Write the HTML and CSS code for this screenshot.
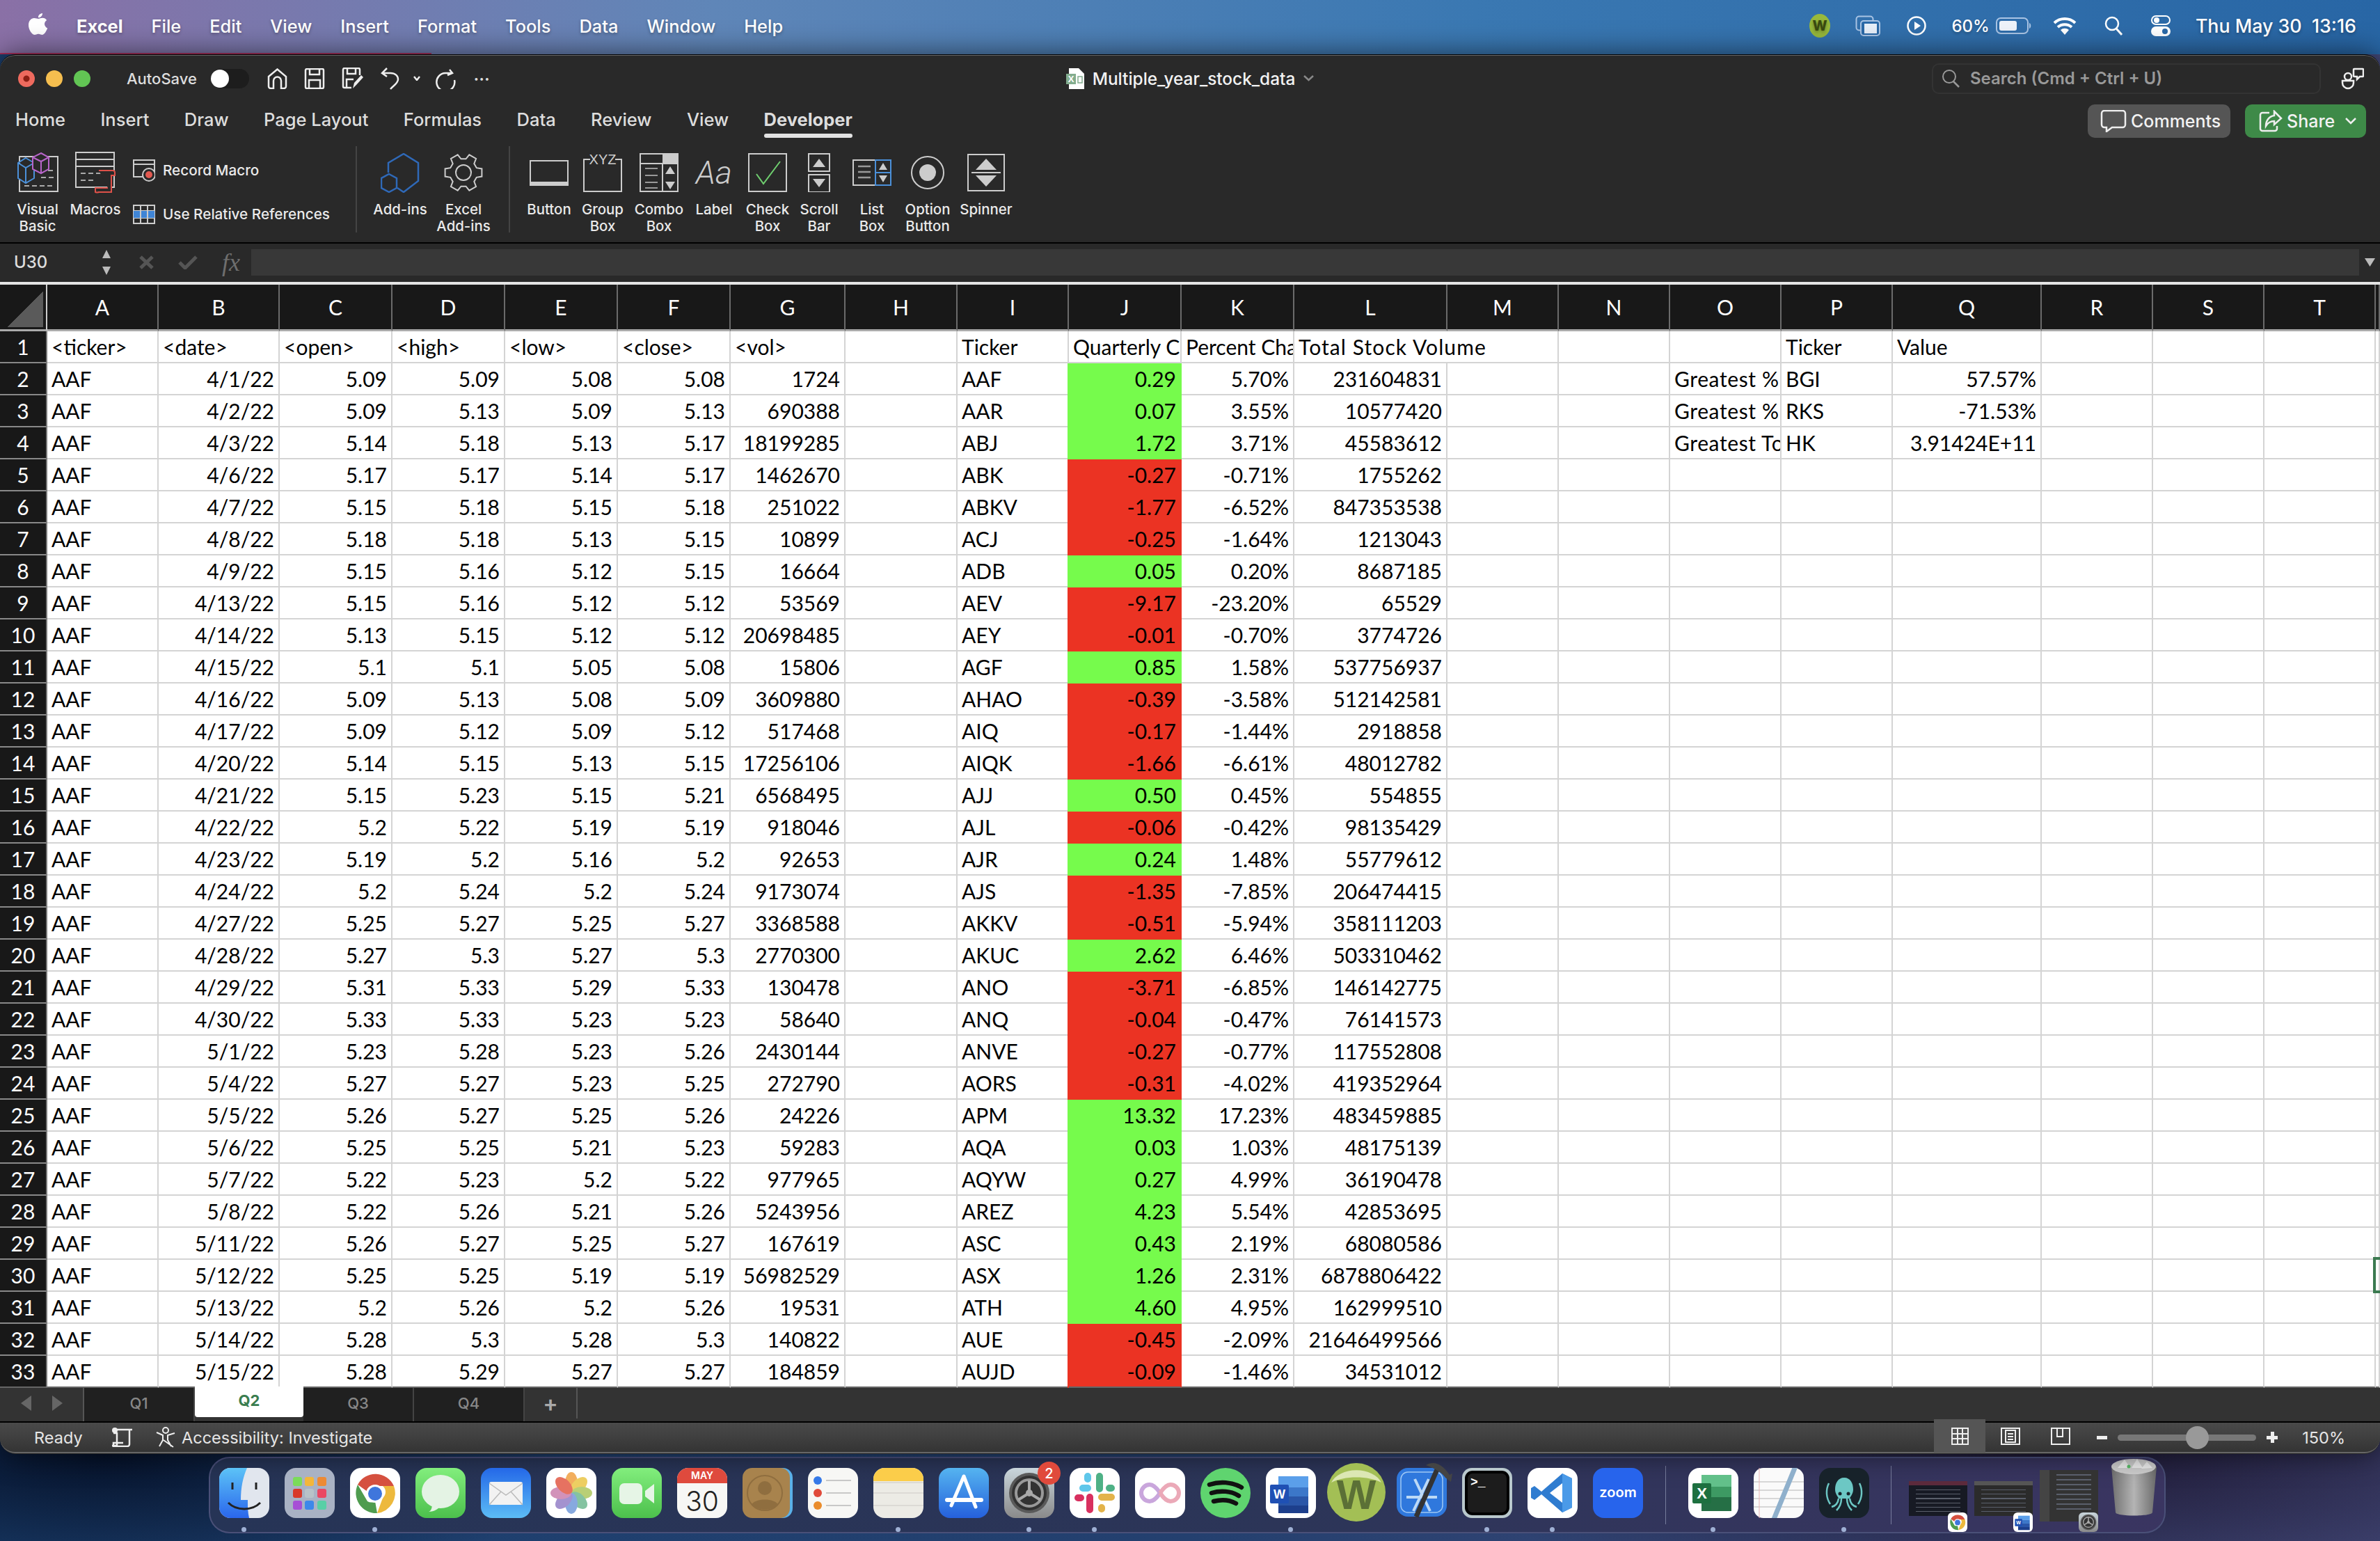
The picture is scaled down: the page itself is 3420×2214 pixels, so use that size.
FILE: index.html
```html
<!DOCTYPE html>
<html lang="en">
<head>
<meta charset="utf-8">
<title>Multiple_year_stock_data</title>
<link rel="stylesheet" href="styles.css">
</head>
<body>
<svg class="defs" width="0" height="0">
<defs>
<linearGradient id="gFinder" x1="0" y1="0" x2="0" y2="1"><stop offset="0" stop-color="#5cc3f7"/><stop offset="1" stop-color="#2a66ec"/></linearGradient>
<linearGradient id="gGreen" x1="0" y1="0" x2="0" y2="1"><stop offset="0" stop-color="#82ee7d"/><stop offset="1" stop-color="#4cc04c"/></linearGradient>
<linearGradient id="gMail" x1="0" y1="0" x2="0" y2="1"><stop offset="0" stop-color="#2468e8"/><stop offset="1" stop-color="#5cbcf6"/></linearGradient>
<linearGradient id="gStore" x1="0" y1="0" x2="0" y2="1"><stop offset="0" stop-color="#55b4f0"/><stop offset="1" stop-color="#2560dc"/></linearGradient>
<linearGradient id="gPrefs" x1="0" y1="0" x2="0" y2="1"><stop offset="0" stop-color="#c9d6dc"/><stop offset="1" stop-color="#8a8a8a"/></linearGradient>
<linearGradient id="gTrash" x1="0" y1="0" x2="1" y2="0"><stop offset="0" stop-color="#6f6f6f"/><stop offset=".5" stop-color="#b4b4b4"/><stop offset="1" stop-color="#6a6a6a"/></linearGradient>
<symbol id="iChrome" viewBox="0 0 72 72"><rect width="72" height="72" rx="16" fill="#fff"/><path d="M11 24a29 29 0 0 1 52 2H36a11 11 0 0 0-11 8z" fill="#d5503f"/><path d="M63 26a29 29 0 0 1-24 39l8-22a11 11 0 0 0 0-17z" fill="#edb93d"/><path d="M11 24l14 24a11 11 0 0 0 11 0l3 17A29 29 0 0 1 11 24z" fill="#4f9c4f"/><circle cx="36" cy="37" r="13" fill="#fff"/><circle cx="36" cy="37" r="10" fill="#3f76dc"/></symbol>
<symbol id="iWord" viewBox="0 0 72 72"><rect width="72" height="72" rx="16" fill="#fff"/><rect x="18" y="12" width="43" height="16" fill="#5b9fea"/><rect x="18" y="28" width="43" height="13" fill="#3c77c9"/><rect x="18" y="41" width="43" height="13" fill="#2a56a8"/><rect x="18" y="54" width="43" height="11" fill="#1d3f8c"/><rect x="6" y="24" width="27" height="27" rx="2" fill="#1f50b4"/><text x="19.500" y="44" class="ic-w">W</text></symbol>
<symbol id="iPrefs" viewBox="0 0 72 72"><rect width="72" height="72" rx="16" fill="url(#gPrefs)"/><circle cx="36" cy="36" r="29" fill="#5a5a5a"/><circle cx="36" cy="36" r="25" fill="#333"/><circle cx="36" cy="36" r="19" fill="none" stroke="#999" stroke-width="4"/><path d="M36 36V18M36 36L20 46M36 36L52 46" stroke="#aaa" stroke-width="4"/><circle cx="36" cy="36" r="5" fill="#aaa"/></symbol>
</defs>
</svg>

<header class="menubar">
  <nav class="menu-left">
    <svg class="apple" width="28" height="32" viewBox="0 0 28 32"><path d="M20 0c.3 3-2.400 6.500-6 6.300C13.600 3 16.600.4 20 0zM14.200 8c1.800 0 3.300-1.200 6-1.200 2.400 0 4.700 1.200 6 3.300-4.700 2.700-4 9.400 1 11.300-1.300 3.600-4.500 9.600-7.600 9.600-2 0-2.900-1.300-5.400-1.300s-3.500 1.300-5.300 1.300C4.800 31 0 23.500 0 17 0 10.700 4 7 8 7c2.500 0 4.400 1 6.200 1z" fill="#fff"/></svg>
    <b>Excel</b><span>File</span><span>Edit</span><span>View</span><span>Insert</span><span>Format</span><span>Tools</span><span>Data</span><span>Window</span><span>Help</span>
  </nav>
  <div class="menu-right">
    <svg class="st-w" width="30" height="34" viewBox="0 0 30 34"><ellipse cx="15" cy="17" rx="15" ry="17" fill="#98b93c"/><text x="15" y="24" class="ic-wsmall">W</text></svg>
    <svg class="st-copy" width="36" height="30" viewBox="0 0 36 30"><rect x="1.500" y="1.500" width="24" height="20" rx="4" fill="none" stroke="#a9c4e4" stroke-width="2"/><rect x="8" y="8" width="27" height="21" rx="4" fill="#2a69a8" stroke="#a9c4e4" stroke-width="2"/><rect x="13" y="12" width="18" height="14" fill="#e6eef8"/></svg>
    <svg class="st-play" width="28" height="28" viewBox="0 0 28 28"><circle cx="14" cy="14" r="12.500" fill="none" stroke="#fff" stroke-width="2.500"/><path d="M11 8l9 6-9 6z" fill="#fff"/></svg>
    <span class="st-pct">60%</span>
    <svg class="st-batt" width="51" height="24" viewBox="0 0 51 24"><rect x="1" y="1" width="45" height="22" rx="6" fill="none" stroke="#a9c4e4" stroke-width="2"/><rect x="5" y="5" width="25" height="14" rx="3" fill="#eef3fa"/><path d="M48 8c3 1 3 7 0 8z" fill="#a9c4e4"/></svg>
    <svg class="st-wifi" width="34" height="26" viewBox="0 0 34 26"><path d="M2 9a22 22 0 0 1 30 0M7 15a15 15 0 0 1 20 0" fill="none" stroke="#fff" stroke-width="4"/><path d="M11 19a9 9 0 0 1 12 0l-6 7z" fill="#fff"/></svg>
    <svg class="st-search" width="26" height="28" viewBox="0 0 26 28"><circle cx="11" cy="11" r="9" fill="none" stroke="#fff" stroke-width="2.500"/><path d="M17 18l8 9" stroke="#fff" stroke-width="3"/></svg>
    <svg class="st-ctl" width="28" height="30" viewBox="0 0 28 30"><rect x="1" y="1" width="26" height="12" rx="6" fill="none" stroke="#fff" stroke-width="2"/><circle cx="8" cy="7" r="4" fill="#fff"/><rect y="16" width="28" height="14" rx="7" fill="#fff"/><circle cx="20" cy="23" r="4" fill="#2a69a8"/></svg>
    <time class="st-time">Thu May 30&nbsp; 13:16</time>
  </div>
</header>

<main class="window">
  <div class="titlebar">
    <div class="tb-left">
      <i class="light red"></i><i class="light yellow"></i><i class="light green"></i>
      <span class="autosave">AutoSave</span>
      <span class="toggle"></span>
      <svg class="qa qa-home" width="29" height="30" viewBox="0 0 29 30"><path d="M2 12L14.500 1.500 27 12v14a3 3 0 0 1-3 3h-4V18a5 5 0 0 0-11 0v11H5a3 3 0 0 1-3-3z" class="ln"/></svg>
      <svg class="qa" width="30" height="30" viewBox="0 0 30 30"><path d="M2 3a2 2 0 0 1 2-2h22a2 2 0 0 1 2 2v24a2 2 0 0 1-2 2H4a2 2 0 0 1-2-2zM8 1v8h14V1M7 29V17h16v12" class="ln"/></svg>
      <svg class="qa" width="32" height="32" viewBox="0 0 32 32"><path d="M2 3a2 2 0 0 1 2-2h20a2 2 0 0 1 2 2v8M14 29H4a2 2 0 0 1-2-2V3M8 1v8h12V1M7 29V17h10" class="ln"/><path d="M16 30l2-8 10-11 3 3-10 11z" fill="#eee"/></svg>
      <svg class="qa" width="27" height="32" viewBox="0 0 27 32"><path d="M9 1L2 8l7 5M2 8h12c7 0 11 4 11 9 0 6-8 10-11 14" class="ln"/></svg>
      <svg class="qa-ch" width="10" height="7" viewBox="0 0 10 7"><path d="M1 1l4 5 4-5" class="ln"/></svg>
      <svg class="qa-redo" width="29" height="30" viewBox="0 0 29 30"><path d="M21 2l4 5-7 3M24 7H15A13 13 0 1 0 28 17" class="ln" transform="translate(-1 0)"/></svg>
      <span class="qa-more">•••</span>
    </div>
    <div class="doc">
      <svg width="26" height="30" viewBox="0 0 26 30"><path d="M4 0h14l8 8v22H4z" fill="#fff"/><rect y="8" width="14" height="15" fill="#83ad8e"/><text x="7" y="20" class="ic-x">X</text><path d="M17 12h6v9h-6z" fill="none" stroke="#83ad8e" stroke-width="1.500"/></svg>
      <span class="doc-name">Multiple_year_stock_data</span>
      <svg width="15" height="9" viewBox="0 0 15 9"><path d="M1 1l6.500 6L14 1" fill="none" stroke="#888" stroke-width="2.500"/></svg>
    </div>
    <div class="tb-right">
      <div class="search">
        <svg width="25" height="26" viewBox="0 0 25 26"><circle cx="10" cy="10" r="9" fill="none" stroke="#999" stroke-width="2"/><path d="M16 17l8 8" stroke="#999" stroke-width="2.500"/></svg>
        <span>Search (Cmd + Ctrl + U)</span>
      </div>
      <svg class="people" width="33" height="32" viewBox="0 0 33 32"><circle cx="10" cy="13" r="5" class="ln"/><path d="M2 19h16v3a8 8 0 0 1-16 0z" class="ln"/><path d="M19 2h12a1 1 0 0 1 1 1v9a1 1 0 0 1-1 1h-4l-4 4v-4h-4a1 1 0 0 1-1-1V3a1 1 0 0 1 1-1z" class="ln"/></svg>
    </div>
  </div>

  <div class="tabsrow">
    <nav class="tabs"><span>Home</span><span>Insert</span><span>Draw</span><span>Page Layout</span><span>Formulas</span><span>Data</span><span>Review</span><span>View</span><span class="active">Developer</span></nav>
    <div class="tab-actions">
      <button class="btn btn-comments"><svg width="38" height="32" viewBox="0 0 38 32"><path d="M6 1h26a4 4 0 0 1 4 4v16a4 4 0 0 1-4 4H17l-8 6v-6H6a4 4 0 0 1-4-4V5a4 4 0 0 1 4-4z" class="ln"/></svg>Comments</button>
      <button class="btn btn-share"><svg width="34" height="32" viewBox="0 0 34 32"><path d="M15 4H5a3 3 0 0 0-3 3v20a3 3 0 0 0 3 3h18a3 3 0 0 0 3-3v-4" class="ln"/><path d="M22 2l10 10-10 9v-5c-6 0-9 2-12 7 0-8 5-14 12-15z" class="ln"/></svg>Share<svg class="share-ch" width="16" height="10" viewBox="0 0 16 10"><path d="M1 1l7 7 7-7" class="ln"/></svg></button>
    </div>
  </div>

  <section class="ribbon">
    <div class="rb-item rb-vb"><div class="rb-icon"><svg width="59" height="58" viewBox="0 0 59 58"><path d="M3 6h55v50H3z" fill="none" stroke="#ccc" stroke-width="2"/><path d="M10 48h42M34 36h18M22 26h30" stroke="#aaa" stroke-width="2" stroke-dasharray="7 4"/><path d="M12 8l12 7v22l-12 7-11-7V15zM1 15l11 7 12-7M12 22v22" fill="#292929" stroke="#4b90d9" stroke-width="2"/><path d="M34 1l11 6v17l-11 6-12-6V7zM22 7l12 6 11-6M34 13v17" fill="#292929" stroke="#b765c9" stroke-width="2"/></svg></div><span>Visual<br>Basic</span></div>
    <div class="rb-item rb-mac"><div class="rb-icon"><svg width="58" height="60" viewBox="0 0 58 60"><path d="M1 1h55v50H1zM1 11h55M1 21h55" fill="none" stroke="#ccc" stroke-width="2"/><path d="M8 31h36M8 41h20" stroke="#aaa" stroke-width="2" stroke-dasharray="7 4"/><path d="M34 27h20a3 3 0 0 1 3 3v4h-5v24H34a6 6 0 0 1-5 0v-6h18" fill="#292929" stroke="#dd5149" stroke-width="2"/></svg></div><span>Macros</span></div>
    <div class="rb-stack">
      <div class="rb-row"><svg width="32" height="32" viewBox="0 0 32 32"><path d="M1 1h30v24H1zM1 7h30" fill="none" stroke="#ccc" stroke-width="2"/><circle cx="23" cy="22" r="9" fill="#292929" stroke="#ccc" stroke-width="2"/><circle cx="23" cy="22" r="5" fill="#e25950"/></svg><span>Record Macro</span></div>
      <div class="rb-row"><svg width="32" height="28" viewBox="0 0 32 28"><path d="M1 1h30v26H1zM11 1v26M21 1v26M1 9h30M1 19h30" fill="none" stroke="#ccc" stroke-width="2"/><path d="M1 9h30v10H1z" fill="#3f85d6"/><path d="M11 9v10M21 9v10" stroke="#ccc" stroke-width="2"/></svg><span>Use Relative References</span></div>
    </div>
    <i class="rb-sep"></i>
    <div class="rb-item rb-add"><div class="rb-icon"><svg width="56" height="57" viewBox="0 0 56 57"><path d="M11 28V14L33 1l21 13v26L33 56l-9-6" fill="none" stroke="#2f69b8" stroke-width="2.500"/><path d="M12 30l11 6v14l-11 6-11-6V36z" fill="none" stroke="#2f69b8" stroke-width="2.500"/></svg></div><span>Add-ins</span></div>
    <div class="rb-item rb-xadd"><div class="rb-icon"><svg width="56" height="56" viewBox="0 0 56 56"><polygon points="54.400,22.400 54.400,33.600 46.800,34.800 43.300,40.900 46.100,48.100 36.300,53.700 31.500,47.700 24.500,47.700 19.700,53.700 9.900,48.100 12.700,40.900 9.200,34.800 1.600,33.600 1.600,22.400 9.200,21.200 12.700,15.100 9.900,7.900 19.700,2.300 24.500,8.300 31.500,8.300 36.300,2.300 46.100,7.900 43.300,15.100 46.800,21.200" fill="none" stroke="#ccc" stroke-width="2"/><circle cx="28" cy="28" r="11" fill="none" stroke="#ccc" stroke-width="2"/></svg></div><span>Excel<br>Add-ins</span></div>
    <i class="rb-sep rb-sep2"></i>
    <div class="rb-item w-btn"><div class="rb-icon"><svg width="56" height="37" viewBox="0 0 56 37"><path d="M1 1h54v35H1z" fill="none" stroke="#ccc" stroke-width="2"/><path d="M1 31h54v5H1z" fill="#ccc"/></svg></div><span>Button</span></div>
    <div class="rb-item w-grp"><div class="rb-icon"><svg width="56" height="56" viewBox="0 0 56 56"><path d="M10 9H1v46h54V9h-9" fill="none" stroke="#ccc" stroke-width="2"/><text x="28" y="16" class="ic-xyz">XYZ</text></svg></div><span>Group<br>Box</span></div>
    <div class="rb-item w-cmb"><div class="rb-icon"><svg width="56" height="56" viewBox="0 0 56 56"><path d="M1 1h54v54H1zM1 15h54M33 15v40" fill="none" stroke="#ccc" stroke-width="2"/><rect x="33" y="1" width="22" height="14" fill="#ccc"/><path d="M44 19l7 11H37zM44 52l7-11H37z" fill="#ccc"/><path d="M8 22h18M8 32h18M8 42h18M8 50h18" stroke="#999" stroke-width="2"/></svg></div><span>Combo<br>Box</span></div>
    <div class="rb-item w-lbl"><div class="rb-icon"><span class="aa">Aa</span></div><span>Label</span></div>
    <div class="rb-item w-chk"><div class="rb-icon"><svg width="56" height="56" viewBox="0 0 56 56"><path d="M1 1h54v54H1z" fill="none" stroke="#ccc" stroke-width="2"/><path d="M12 30l10 14 24-32" fill="none" stroke="#6fcf6f" stroke-width="2"/></svg></div><span>Check<br>Box</span></div>
    <div class="rb-item w-scr"><div class="rb-icon"><svg width="32" height="56" viewBox="0 0 32 56"><path d="M1 1h30v25H1zM1 31h30v25H1z" fill="none" stroke="#ccc" stroke-width="2"/><path d="M16 8l9 12H7zM16 49l9-12H7z" fill="#ccc"/></svg></div><span>Scroll<br>Bar</span></div>
    <div class="rb-item w-lst"><div class="rb-icon"><svg width="56" height="38" viewBox="0 0 56 38"><path d="M33 1H1v36h32" fill="none" stroke="#ccc" stroke-width="2"/><path d="M33 1h22v36H33zM33 19h22" fill="none" stroke="#4b90d9" stroke-width="2"/><path d="M44 5l6 10H38zM44 33l6-10H38z" fill="#ccc"/><path d="M8 10h18M8 18h18M8 26h18" stroke="#999" stroke-width="2.500"/></svg></div><span>List<br>Box</span></div>
    <div class="rb-item w-opt"><div class="rb-icon"><svg width="48" height="48" viewBox="0 0 48 48"><circle cx="24" cy="24" r="23" fill="none" stroke="#ccc" stroke-width="2"/><circle cx="24" cy="24" r="12" fill="#ccc"/></svg></div><span>Option<br>Button</span></div>
    <div class="rb-item w-spn"><div class="rb-icon"><svg width="54" height="54" viewBox="0 0 54 54"><path d="M1 1h52v52H1z" fill="none" stroke="#ccc" stroke-width="2"/><path d="M27 7l15 16H12zM27 47l15-16H12z" fill="#ccc"/><path d="M6 27h42" stroke="#ccc" stroke-width="2"/></svg></div><span>Spinner</span></div>
  </section>

  <div class="formula">
    <div class="namebox"><span>U30</span><svg width="14" height="36" viewBox="0 0 14 36"><path d="M7 0l6 12H1zM7 36l6-12H1z" fill="#bbb"/></svg></div>
    <div class="fx-btns">
      <svg width="21" height="20" viewBox="0 0 21 20"><path d="M2 2l17 16M19 2L2 18" stroke="#555" stroke-width="5"/></svg>
      <svg width="28" height="20" viewBox="0 0 28 20"><path d="M2 10l8 8L26 2" fill="none" stroke="#555" stroke-width="5"/></svg>
      <em>fx</em>
    </div>
    <div class="fx-input"></div>
    <svg class="fx-drop" width="15" height="12" viewBox="0 0 15 12"><path d="M0 0h15l-7.500 12z" fill="#bbb"/></svg>
  </div>

  <div class="sheet">
    <table>
      <colgroup><col class="c-h"><col class="c-a"><col class="c-b"><col class="c-n"><col class="c-n"><col class="c-n"><col class="c-n"><col class="c-g"><col class="c-hh"><col class="c-s"><col class="c-n"><col class="c-n"><col class="c-l"><col class="c-s"><col class="c-s"><col class="c-s"><col class="c-s"><col class="c-q"><col class="c-s"><col class="c-s"><col class="c-s"><col class="c-u"></colgroup>
      <thead><tr><th class="corner"></th><th>A</th><th>B</th><th>C</th><th>D</th><th>E</th><th>F</th><th>G</th><th>H</th><th>I</th><th>J</th><th>K</th><th>L</th><th>M</th><th>N</th><th>O</th><th>P</th><th>Q</th><th>R</th><th>S</th><th>T</th><th></th></tr></thead>
      <tbody>
<tr class="head"><th>1<td>&lt;ticker&gt;<td>&lt;date&gt;<td>&lt;open&gt;<td>&lt;high&gt;<td>&lt;low&gt;<td>&lt;close&gt;<td>&lt;vol&gt;<td><td>Ticker<td>Quarterly Change<td>Percent Change<td colspan="2" class="wide">Total Stock Volume<td><td><td>Ticker<td>Value<td><td><td><td>
<tr><th>2<td>AAF<td>4/1/22<td>5.09<td>5.09<td>5.08<td>5.08<td>1724<td><td>AAF<td class="up">0.29<td>5.70%<td>231604831<td><td><td>Greatest % Increase<td>BGI<td>57.57%<td><td><td><td>
<tr><th>3<td>AAF<td>4/2/22<td>5.09<td>5.13<td>5.09<td>5.13<td>690388<td><td>AAR<td class="up">0.07<td>3.55%<td>10577420<td><td><td>Greatest % Decrease<td>RKS<td>-71.53%<td><td><td><td>
<tr><th>4<td>AAF<td>4/3/22<td>5.14<td>5.18<td>5.13<td>5.17<td>18199285<td><td>ABJ<td class="up">1.72<td>3.71%<td>45583612<td><td><td>Greatest Total Volume<td>HK<td>3.91424E+11<td><td><td><td>
<tr><th>5<td>AAF<td>4/6/22<td>5.17<td>5.17<td>5.14<td>5.17<td>1462670<td><td>ABK<td class="dn">-0.27<td>-0.71%<td>1755262<td><td><td><td><td><td><td><td><td>
<tr><th>6<td>AAF<td>4/7/22<td>5.15<td>5.18<td>5.15<td>5.18<td>251022<td><td>ABKV<td class="dn">-1.77<td>-6.52%<td>847353538<td><td><td><td><td><td><td><td><td>
<tr><th>7<td>AAF<td>4/8/22<td>5.18<td>5.18<td>5.13<td>5.15<td>10899<td><td>ACJ<td class="dn">-0.25<td>-1.64%<td>1213043<td><td><td><td><td><td><td><td><td>
<tr><th>8<td>AAF<td>4/9/22<td>5.15<td>5.16<td>5.12<td>5.15<td>16664<td><td>ADB<td class="up">0.05<td>0.20%<td>8687185<td><td><td><td><td><td><td><td><td>
<tr><th>9<td>AAF<td>4/13/22<td>5.15<td>5.16<td>5.12<td>5.12<td>53569<td><td>AEV<td class="dn">-9.17<td>-23.20%<td>65529<td><td><td><td><td><td><td><td><td>
<tr><th>10<td>AAF<td>4/14/22<td>5.13<td>5.15<td>5.12<td>5.12<td>20698485<td><td>AEY<td class="dn">-0.01<td>-0.70%<td>3774726<td><td><td><td><td><td><td><td><td>
<tr><th>11<td>AAF<td>4/15/22<td>5.1<td>5.1<td>5.05<td>5.08<td>15806<td><td>AGF<td class="up">0.85<td>1.58%<td>537756937<td><td><td><td><td><td><td><td><td>
<tr><th>12<td>AAF<td>4/16/22<td>5.09<td>5.13<td>5.08<td>5.09<td>3609880<td><td>AHAO<td class="dn">-0.39<td>-3.58%<td>512142581<td><td><td><td><td><td><td><td><td>
<tr><th>13<td>AAF<td>4/17/22<td>5.09<td>5.12<td>5.09<td>5.12<td>517468<td><td>AIQ<td class="dn">-0.17<td>-1.44%<td>2918858<td><td><td><td><td><td><td><td><td>
<tr><th>14<td>AAF<td>4/20/22<td>5.14<td>5.15<td>5.13<td>5.15<td>17256106<td><td>AIQK<td class="dn">-1.66<td>-6.61%<td>48012782<td><td><td><td><td><td><td><td><td>
<tr><th>15<td>AAF<td>4/21/22<td>5.15<td>5.23<td>5.15<td>5.21<td>6568495<td><td>AJJ<td class="up">0.50<td>0.45%<td>554855<td><td><td><td><td><td><td><td><td>
<tr><th>16<td>AAF<td>4/22/22<td>5.2<td>5.22<td>5.19<td>5.19<td>918046<td><td>AJL<td class="dn">-0.06<td>-0.42%<td>98135429<td><td><td><td><td><td><td><td><td>
<tr><th>17<td>AAF<td>4/23/22<td>5.19<td>5.2<td>5.16<td>5.2<td>92653<td><td>AJR<td class="up">0.24<td>1.48%<td>55779612<td><td><td><td><td><td><td><td><td>
<tr><th>18<td>AAF<td>4/24/22<td>5.2<td>5.24<td>5.2<td>5.24<td>9173074<td><td>AJS<td class="dn">-1.35<td>-7.85%<td>206474415<td><td><td><td><td><td><td><td><td>
<tr><th>19<td>AAF<td>4/27/22<td>5.25<td>5.27<td>5.25<td>5.27<td>3368588<td><td>AKKV<td class="dn">-0.51<td>-5.94%<td>358111203<td><td><td><td><td><td><td><td><td>
<tr><th>20<td>AAF<td>4/28/22<td>5.27<td>5.3<td>5.27<td>5.3<td>2770300<td><td>AKUC<td class="up">2.62<td>6.46%<td>503310462<td><td><td><td><td><td><td><td><td>
<tr><th>21<td>AAF<td>4/29/22<td>5.31<td>5.33<td>5.29<td>5.33<td>130478<td><td>ANO<td class="dn">-3.71<td>-6.85%<td>146142775<td><td><td><td><td><td><td><td><td>
<tr><th>22<td>AAF<td>4/30/22<td>5.33<td>5.33<td>5.23<td>5.23<td>58640<td><td>ANQ<td class="dn">-0.04<td>-0.47%<td>76141573<td><td><td><td><td><td><td><td><td>
<tr><th>23<td>AAF<td>5/1/22<td>5.23<td>5.28<td>5.23<td>5.26<td>2430144<td><td>ANVE<td class="dn">-0.27<td>-0.77%<td>117552808<td><td><td><td><td><td><td><td><td>
<tr><th>24<td>AAF<td>5/4/22<td>5.27<td>5.27<td>5.23<td>5.25<td>272790<td><td>AORS<td class="dn">-0.31<td>-4.02%<td>419352964<td><td><td><td><td><td><td><td><td>
<tr><th>25<td>AAF<td>5/5/22<td>5.26<td>5.27<td>5.25<td>5.26<td>24226<td><td>APM<td class="up">13.32<td>17.23%<td>483459885<td><td><td><td><td><td><td><td><td>
<tr><th>26<td>AAF<td>5/6/22<td>5.25<td>5.25<td>5.21<td>5.23<td>59283<td><td>AQA<td class="up">0.03<td>1.03%<td>48175139<td><td><td><td><td><td><td><td><td>
<tr><th>27<td>AAF<td>5/7/22<td>5.22<td>5.23<td>5.2<td>5.22<td>977965<td><td>AQYW<td class="up">0.27<td>4.99%<td>36190478<td><td><td><td><td><td><td><td><td>
<tr><th>28<td>AAF<td>5/8/22<td>5.22<td>5.26<td>5.21<td>5.26<td>5243956<td><td>AREZ<td class="up">4.23<td>5.54%<td>42853695<td><td><td><td><td><td><td><td><td>
<tr><th>29<td>AAF<td>5/11/22<td>5.26<td>5.27<td>5.25<td>5.27<td>167619<td><td>ASC<td class="up">0.43<td>2.19%<td>68080586<td><td><td><td><td><td><td><td><td>
<tr class="sel"><th>30<td>AAF<td>5/12/22<td>5.25<td>5.25<td>5.19<td>5.19<td>56982529<td><td>ASX<td class="up">1.26<td>2.31%<td>6878806422<td><td><td><td><td><td><td><td><td>
<tr><th>31<td>AAF<td>5/13/22<td>5.2<td>5.26<td>5.2<td>5.26<td>19531<td><td>ATH<td class="up">4.60<td>4.95%<td>162999510<td><td><td><td><td><td><td><td><td>
<tr><th>32<td>AAF<td>5/14/22<td>5.28<td>5.3<td>5.28<td>5.3<td>140822<td><td>AUE<td class="dn">-0.45<td>-2.09%<td>21646499566<td><td><td><td><td><td><td><td><td>
<tr class="last"><th>33<td>AAF<td>5/15/22<td>5.28<td>5.29<td>5.27<td>5.27<td>184859<td><td>AUJD<td class="dn">-0.09<td>-1.46%<td>34531012<td><td><td><td><td><td><td><td><td>
      </tbody>
    </table>
    <i class="selection"></i>
  </div>

  <div class="sheetbar">
    <div class="sheet-nav"><svg width="15" height="22" viewBox="0 0 15 22"><path d="M15 0v22L0 11z" fill="#666"/></svg><svg width="15" height="22" viewBox="0 0 15 22"><path d="M0 0v22l15-11z" fill="#666"/></svg></div>
    <span class="stab">Q1</span><span class="stab on">Q2</span><span class="stab">Q3</span><span class="stab">Q4</span>
    <span class="stab-add">+</span>
  </div>

  <footer class="status">
    <span class="s-ready">Ready</span>
    <svg class="s-macro" width="31" height="28" viewBox="0 0 31 28"><circle cx="5" cy="4" r="4" fill="#eee"/><path d="M3 8h5v18H1M8 3h20M26 3h4M26 3v21a3 3 0 0 1-3 3H3v-5h14" fill="none" stroke="#eee" stroke-width="2.500"/></svg>
    <svg class="s-acc" width="31" height="30" viewBox="0 0 31 30"><circle cx="15" cy="5" r="4" fill="none" stroke="#eee" stroke-width="2"/><path d="M2 8l9 4v7l-5 9M28 9l-10 3v7l5 9M12 19l14 10" fill="none" stroke="#eee" stroke-width="2"/></svg>
    <span class="s-text">Accessibility: Investigate</span>
    <div class="s-right">
      <span class="view on"><svg width="25" height="25" viewBox="0 0 25 25"><path d="M1 1h23v23H1zM9 1v23M16 1v23M1 9h23M1 16h23" fill="none" stroke="#eee" stroke-width="2"/></svg></span>
      <span class="view"><svg width="28" height="25" viewBox="0 0 28 25"><path d="M1 1h26v23H1z" fill="none" stroke="#eee" stroke-width="2"/><path d="M7 4h14v17H7z" fill="none" stroke="#eee" stroke-width="2"/><path d="M10 9h8M10 13h8M10 17h8" stroke="#eee" stroke-width="2"/></svg></span>
      <span class="view"><svg width="28" height="25" viewBox="0 0 28 25"><path d="M1 1h26v23H1zM17 1v12H9V1" fill="none" stroke="#eee" stroke-width="2"/></svg></span>
      <i class="z-minus"></i>
      <div class="slider"><i></i></div>
      <i class="z-plus"></i>
      <span class="z-val">150%</span>
    </div>
  </footer>
</main>

<nav class="dock">
  <div class="app on"><svg width="72" height="72" viewBox="0 0 72 72"><rect width="72" height="72" rx="16" fill="#e1e6ee"/><path d="M16 0h24c-6 14-9 28-9 46h10c0 10 0 18 2 26H16A16 16 0 0 1 0 56V16A16 16 0 0 1 16 0z" fill="url(#gFinder)"/><path d="M19 21v10M53 21v10" stroke="#222" stroke-width="3"/><path d="M13 50c12 12 34 12 46 0" fill="none" stroke="#222" stroke-width="3"/></svg></div>
  <div class="app"><svg width="72" height="72" viewBox="0 0 72 72"><rect width="72" height="72" rx="16" fill="#a9b2c4"/><rect x="12" y="13" width="13" height="13" rx="3" fill="#7bdc5a"/><rect x="29" y="13" width="13" height="13" rx="3" fill="#f3b63a"/><rect x="47" y="13" width="13" height="13" rx="3" fill="#ed8a35"/><rect x="12" y="30" width="13" height="13" rx="3" fill="#d83a2a"/><rect x="29" y="30" width="13" height="13" rx="3" fill="#b8c2c8"/><rect x="47" y="30" width="13" height="13" rx="3" fill="#ea4763"/><rect x="12" y="47" width="13" height="13" rx="3" fill="#a74fd6"/><rect x="29" y="47" width="13" height="13" rx="3" fill="#3d88ea"/><rect x="47" y="47" width="13" height="13" rx="3" fill="#59cfa6"/></svg></div>
  <div class="app on"><svg width="72" height="72"><use href="#iChrome"/></svg></div>
  <div class="app"><svg width="72" height="72" viewBox="0 0 72 72"><rect width="72" height="72" rx="16" fill="url(#gGreen)"/><ellipse cx="36" cy="34" rx="27" ry="24" fill="#e4f3e4"/><path d="M24 52c0 6-2 10-5 11 6 0 12-3 15-6z" fill="#e4f3e4"/></svg></div>
  <div class="app"><svg width="72" height="72" viewBox="0 0 72 72"><rect width="72" height="72" rx="16" fill="url(#gMail)"/><rect x="12" y="20" width="48" height="33" rx="3" fill="#f2f2f2"/><path d="M12 22l24 17 24-17M12 53l17-19M60 53L43 34" fill="none" stroke="#bbb" stroke-width="1.500"/></svg></div>
  <div class="app"><svg width="72" height="72" viewBox="0 0 72 72"><rect width="72" height="72" rx="16" fill="#fff"/><g opacity=".8"><ellipse cx="36" cy="21" rx="9" ry="15" fill="#f09a36"/><ellipse cx="36" cy="21" rx="9" ry="15" fill="#e9c23c" transform="rotate(45 36 36)"/><ellipse cx="36" cy="21" rx="9" ry="15" fill="#a8c455" transform="rotate(90 36 36)"/><ellipse cx="36" cy="21" rx="9" ry="15" fill="#67b58a" transform="rotate(135 36 36)"/><ellipse cx="36" cy="21" rx="9" ry="15" fill="#6a94d8" transform="rotate(180 36 36)"/><ellipse cx="36" cy="21" rx="9" ry="15" fill="#8d77c4" transform="rotate(225 36 36)"/><ellipse cx="36" cy="21" rx="9" ry="15" fill="#c878a8" transform="rotate(270 36 36)"/><ellipse cx="36" cy="21" rx="9" ry="15" fill="#e0503a" transform="rotate(315 36 36)"/></g></svg></div>
  <div class="app"><svg width="72" height="72" viewBox="0 0 72 72"><rect width="72" height="72" rx="16" fill="url(#gGreen)"/><rect x="11" y="22" width="33" height="30" rx="7" fill="#e6f5e6"/><path d="M48 33l13-10v28L48 41z" fill="#e6f5e6"/></svg></div>
  <div class="app"><svg width="72" height="72" viewBox="0 0 72 72"><rect width="72" height="72" rx="16" fill="#f7f7f5"/><path d="M0 22V16A16 16 0 0 1 16 0h40a16 16 0 0 1 16 16v6z" fill="#df4a3d"/><text x="36" y="16" class="ic-may">MAY</text><text x="36" y="62" class="ic-30">30</text></svg></div>
  <div class="app"><svg width="72" height="72" viewBox="0 0 72 72"><rect x="4" width="68" height="72" rx="14" fill="#5ab0e8"/><rect width="68" height="72" rx="14" fill="#a8834d"/><circle cx="32" cy="36" r="25" fill="none" stroke="#8f6e3f" stroke-width="2"/><circle cx="32" cy="29" r="10" fill="#8f6e3f"/><path d="M13 53c4-10 34-10 38 0-10 9-28 9-38 0z" fill="#8f6e3f"/></svg></div>
  <div class="app"><svg width="72" height="72" viewBox="0 0 72 72"><rect width="72" height="72" rx="16" fill="#f7f7f5"/><circle cx="14" cy="18" r="6" fill="#3579e8"/><circle cx="14" cy="36" r="6" fill="#e04a3a"/><circle cx="14" cy="54" r="6" fill="#ea8c2c"/><path d="M26 18h36M26 36h36M26 54h36" stroke="#c8c8c8" stroke-width="2"/></svg></div>
  <div class="app on"><svg width="72" height="72" viewBox="0 0 72 72"><rect width="72" height="72" rx="16" fill="#ecebe5"/><path d="M0 19V16A16 16 0 0 1 16 0h40a16 16 0 0 1 16 16v3z" fill="#fbcd4a"/><path d="M0 21h72M0 36h72M0 54h72" stroke="#d6d5cf" stroke-width="1.500"/></svg></div>
  <div class="app"><svg width="72" height="72" viewBox="0 0 72 72"><rect width="72" height="72" rx="16" fill="url(#gStore)"/><path d="M36 12L18 54M36 12l17 44" stroke="#fff" stroke-width="5" stroke-linecap="round"/><path d="M12 46h49" stroke="#fff" stroke-width="6" stroke-linecap="round"/></svg></div>
  <div class="app on"><svg width="72" height="72"><use href="#iPrefs"/></svg><span class="badge">2</span></div>
  <div class="app on"><svg width="72" height="72" viewBox="0 0 72 72"><rect width="72" height="72" rx="16" fill="#fff"/><g stroke-width="10" stroke-linecap="round"><path d="M26 29H19M26 12v4" stroke="#5fc7ea"/><path d="M43 12v18M60 29h-3" stroke="#4eb186"/><path d="M46 42h14M46 59v-2" stroke="#e3b34a"/><path d="M29 42v18M12 43h4" stroke="#d8305f"/></g></svg></div>
  <div class="app"><svg width="72" height="72" viewBox="0 0 72 72"><rect width="72" height="72" rx="16" fill="#fff"/><path d="M36 36c-6-9-10-12-15-12a12 12 0 0 0 0 24c5 0 9-3 15-12" fill="none" stroke="#c9a6dc" stroke-width="6"/><path d="M36 36c6-9 10-12 15-12a12 12 0 0 1 0 24c-5 0-9-3-15-12" fill="none" stroke="#eba9b8" stroke-width="6"/></svg></div>
  <div class="app"><svg width="72" height="72" viewBox="0 0 72 72"><circle cx="36" cy="36" r="36" fill="#5fd46f"/><path d="M13 24c15-5 32-4 46 4M16 36c13-4 28-3 39 4M19 48c11-3 23-2 32 3" fill="none" stroke="#111" stroke-width="6.500" stroke-linecap="round"/></svg></div>
  <div class="app on"><svg width="72" height="72"><use href="#iWord"/></svg></div>
  <div class="app app-w"><svg width="84" height="84" viewBox="0 0 84 84"><circle cx="42" cy="42" r="42" fill="#a3bf55"/><path d="M6 28a38 26 0 0 1 72 0C60 18 24 18 6 28z" fill="#dce7b4"/><text x="42" y="66" class="ic-bigw">W</text></svg></div>
  <div class="app app-x"><svg width="80" height="82" viewBox="0 0 80 82"><rect y="10" width="72" height="70" rx="16" fill="#2f78dd"/><rect x="6" y="16" width="60" height="58" rx="10" fill="none" stroke="#9fc8f4" stroke-width="1.500"/><path d="M26 26l22 46M46 26L24 72M14 52h44" stroke="#bcd9f6" stroke-width="4"/><path d="M60 8L28 80" stroke="#333" stroke-width="7"/><path d="M42 6c10-6 22-4 34 14l4-2-2 12-8-6c-4-6-12-12-28-18z" fill="#444"/></svg></div>
  <div class="app on"><svg width="72" height="72" viewBox="0 0 72 72"><rect width="72" height="72" rx="14" fill="#b9c8cc"/><rect x="4" y="4" width="64" height="64" rx="11" fill="#000"/><rect x="8" y="8" width="56" height="56" rx="7" fill="#1c1c1c"/><text x="12" y="26" class="ic-term">&gt;_</text></svg></div>
  <div class="app on"><svg width="72" height="72" viewBox="0 0 72 72"><rect width="72" height="72" rx="16" fill="#fff"/><path d="M50 8l14 7v42l-14 7-30-26-10 8-5-3V29l5-3 10 8z" fill="#2f7cd0"/><path d="M50 8l14 7v42l-14 7z" fill="#4a9ae8"/><path d="M50 22L32 36l18 14z" fill="#fff"/></svg></div>
  <div class="app"><svg width="72" height="72" viewBox="0 0 72 72"><rect width="72" height="72" rx="16" fill="#2764ec"/><text x="36" y="42" class="ic-zoom">zoom</text></svg></div>
  <i class="dock-sep"></i>
  <div class="app on"><svg width="72" height="72" viewBox="0 0 72 72"><rect width="72" height="72" rx="16" fill="#fff"/><rect x="19" y="10" width="43" height="17" fill="#62c08a"/><rect x="19" y="27" width="43" height="15" fill="#3d9a63"/><rect x="19" y="42" width="43" height="20" fill="#256f45"/><rect x="6" y="22" width="27" height="29" rx="2" fill="#1e7040"/><text x="19.500" y="44" class="ic-x2">X</text></svg></div>
  <div class="app"><svg width="72" height="72" viewBox="0 0 72 72"><rect width="72" height="72" rx="14" fill="#fafafa"/><path d="M0 20h72M0 32h72M0 44h72M0 56h72" stroke="#ccc" stroke-width="1.500"/><path d="M8 0v72" stroke="#e8b4b4"/><path d="M64-12L28 76" stroke="#8fb0cc" stroke-width="7"/></svg></div>
  <div class="app on"><svg width="72" height="72" viewBox="0 0 72 72"><rect width="72" height="72" rx="16" fill="#17222a"/><path d="M36 14c9 0 13 8 13 17 0 6-4 10-5 13H28c-1-3-5-7-5-13 0-9 4-17 13-17z" fill="#6cc7c4"/><path d="M28 44c-1 8-6 11-10 12M32 44c0 8-3 13-7 17M40 44c0 8 3 13 7 17M44 44c1 8 6 11 10 12M14 22a30 30 0 0 0 2 30M58 22a30 30 0 0 1-2 30" fill="none" stroke="#6cc7c4" stroke-width="2.500"/><circle cx="30" cy="37" r="2.500" fill="#17222a"/><circle cx="42" cy="37" r="2.500" fill="#17222a"/></svg></div>
  <i class="dock-sep dock-sep2"></i>
  <div class="thumb"><span class="page p-red"><i></i><i></i><i></i><i></i><i></i><i></i></span><svg width="28" height="28"><use href="#iChrome"/></svg></div>
  <div class="thumb"><span class="page p-grey"><i></i><i></i><i></i><i></i><i></i><i></i></span><svg width="28" height="28"><use href="#iWord"/></svg></div>
  <div class="thumb"><span class="page p-tall"><i></i><i></i><i></i><i></i><i></i><i></i><i></i><i></i></span><svg width="28" height="28"><use href="#iPrefs"/></svg></div>
  <div class="trash"><svg width="67" height="84" viewBox="0 0 67 84"><path d="M1 12l6 66c1 6 52 6 53 0l6-66z" fill="url(#gTrash)"/><ellipse cx="33" cy="12" rx="32" ry="11" fill="#cfcfcf"/><path d="M10 14l10-12 8 12zM30 14l8-13 8 13zM44 15l8-10 8 9z" fill="#f0f0f0"/><circle cx="26" cy="12" r="2.500" fill="#5cbf6a"/></svg></div>
</nav>
</body>
</html>
```

FILE: styles.css
```css
* { box-sizing: border-box; }
html, body { margin: 0; padding: 0; }
body {
  width: 3420px;
  height: 2214px;
  overflow: hidden;
  font-family: Inter, "Liberation Sans", sans-serif;
  color: #eee;
  background:
    radial-gradient(900px 220px at 2950px 2090px, rgba(20, 10, 30, .75), transparent),
    radial-gradient(700px 200px at 150px 2090px, rgba(2, 10, 30, .85), transparent),
    linear-gradient(90deg, #1b3f6e 0%, #24406f 50%, #3d4676 85%, #424878 100%);
}
.defs { position: absolute; }
svg { display: block; flex: none; }
.ln { fill: none; stroke: #eee; stroke-width: 2.5; }

/* menu bar */
.menubar {
  height: 78px;
  display: flex;
  justify-content: space-between;
  align-items: flex-start;
  font-size: 25.4px;
  color: #fff;
  text-shadow: 0 2px 4px rgba(0, 0, 0, .3);
  background:
    linear-gradient(#a8305c, #a8305c) no-repeat 0 100% / 620px 2px,
    linear-gradient(90deg, #8a70a6 0%, #5f86b8 30%, #3a78b2 62%, #2866a5 100%);
}
.menu-left { display: flex; align-items: center; height: 74px; padding-left: 41px; gap: 41px; }
.menu-left span { font-weight: 500; }
.menu-left b { font-weight: 700; }
.apple { margin-top: -4px; }
.menu-right { display: flex; align-items: center; height: 74px; padding-right: 34px; }
.st-w { margin-right: 36px; }
.st-copy { margin-right: 38px; }
.st-play { margin-right: 36px; }
.st-pct { font-size: 24px; font-weight: 500; margin-right: 9px; }
.st-batt { margin-right: 31px; }
.st-wifi { margin-right: 40px; }
.st-search { margin-right: 41px; }
.st-ctl { margin-right: 36px; }
.st-time { font-size: 26.8px; font-weight: 500; white-space: nowrap; }

/* window */
.window {
  height: 2011px;
  background: #292929;
  border-top: 1px solid #000;
  border-radius: 22px;
  box-shadow: inset 0 1px 0 #666, 0 0 40px rgba(0, 0, 0, .6);
  overflow: hidden;
  position: relative;
}
.titlebar {
  height: 67px;
  display: grid;
  grid-template-columns: 1fr auto 1fr;
  align-items: center;
}
.tb-left { display: flex; align-items: center; padding-left: 26px; }
.light { width: 24px; height: 24px; border-radius: 50%; margin-right: 16px; }
.red { background: radial-gradient(circle, #8d1f14 0 4px, #ee6a5e 5px); }
.yellow { background: #f5be4f; }
.green { background: #62c554; }
.autosave { font-size: 22px; font-weight: 500; color: #ddd; margin-left: 36px; }
.toggle {
  width: 55px; height: 28px; margin: 0 26px 0 20px;
  border-radius: 14px; background: #1d1d1d;
  display: block; position: relative;
}
.toggle::after {
  content: ""; position: absolute; left: 0; top: 1px;
  width: 26px; height: 26px; border-radius: 50%; background: #fff;
}
.qa { margin-right: 24px; }
.qa-ch { margin: 0 22px 0 -4px; }
.qa-redo { margin-right: 26px; }
.qa-more { font-size: 12px; letter-spacing: 1px; color: #ddd; }
.doc { display: flex; align-items: center; gap: 12px; }
.doc-name { font-size: 24.4px; font-weight: 500; color: #f2f2f2; }
.tb-right { display: flex; align-items: center; justify-content: flex-end; padding-right: 23px; gap: 29px; }
.search {
  width: 559px; height: 44px;
  border: 2px solid #333; border-radius: 10px;
  display: flex; align-items: center; gap: 15px; padding-left: 13px;
  color: #999; font-size: 24px; font-weight: 600;
}

.tabsrow { height: 52px; display: flex; justify-content: space-between; align-items: center; }
.tabs { display: flex; gap: 50.4px; padding-left: 22px; font-size: 25.5px; font-weight: 500; color: #ddd; height: 100%; }
.tabs span { display: flex; align-items: center; position: relative; padding-bottom: 2px; }
.tabs .active { font-weight: 700; }
.tabs .active::after {
  content: ""; position: absolute; left: 0; right: 0; bottom: 0;
  height: 6px; border-radius: 3px; background: #e2e2e2;
}
.tab-actions { display: flex; gap: 21px; padding-right: 20px; align-self: flex-end; }
.btn {
  height: 48px; border: 0; border-radius: 10px; color: #f2f2f2;
  font: 500 25px Inter, "Liberation Sans", sans-serif;
  display: flex; align-items: center; padding: 0;
}
.btn-comments { width: 205px; background: #555; gap: 6px; padding-left: 18px; }
.btn-share { width: 174px; background: #3e8a48; gap: 6px; padding-left: 20px; }
.share-ch { margin-left: 9px; }

.ribbon { height: 152px; display: flex; padding-left: 14px; border-bottom: 2px solid #000; font-size: 20.4px; font-weight: 500; color: #eaeaea; line-height: 24px; }
.rb-item { display: flex; flex-direction: column; align-items: center; text-align: center; padding-top: 14px; white-space: nowrap; }
.rb-icon { height: 72px; margin-bottom: 5px; display: flex; align-items: center; justify-content: center; }
.rb-vb { width: 80px; }
.rb-mac { width: 86px; }
.rb-stack { width: 320px; margin-left: 11px; padding-top: 31px; display: flex; flex-direction: column; gap: 31px; font-size: 20.7px; }
.rb-row { height: 32px; display: flex; align-items: center; gap: 11px; white-space: nowrap; }
.rb-sep { width: 2px; height: 124px; margin-top: 12px; background: #444; }
.rb-add { width: 82px; margin-left: 21px; }
.rb-xadd { width: 100px; }
.rb-sep2 { margin-left: 15px; margin-right: 17px; }
.w-btn { width: 78px; } .w-grp { width: 76px; } .w-cmb { width: 86px; } .w-lbl { width: 72px; }
.w-chk { width: 82px; } .w-scr { width: 66px; } .w-lst { width: 86px; } .w-opt { width: 74px; } .w-spn { width: 94px; }
.aa { font: italic 300 46px Roboto, sans-serif; color: #ccc; }
.ic-xyz { font: 20px "Liberation Sans", sans-serif; fill: #ccc; text-anchor: middle; }
.ic-x { font: 700 13px "Liberation Sans", sans-serif; fill: #fff; text-anchor: middle; }
.ic-w { font: 700 18px "Liberation Sans", sans-serif; fill: #fff; text-anchor: middle; }
.ic-x2 { font: 700 22px "Liberation Sans", sans-serif; fill: #fff; text-anchor: middle; }
.ic-wsmall { font: 800 20px Inter, sans-serif; fill: #3a4a10; text-anchor: middle; }
.ic-may { font: 600 14px Inter, sans-serif; fill: #fff; text-anchor: middle; }
.ic-30 { font: 300 39px Inter, sans-serif; fill: #222; text-anchor: middle; }
.ic-bigw { font: 800 60px "Liberation Sans", sans-serif; fill: #5b7036; text-anchor: middle; }
.ic-term { font: 700 18px "Liberation Mono", monospace; fill: #fff; }
.ic-zoom { font: 600 20px Inter, sans-serif; fill: #fff; text-anchor: middle; }

/* formula bar */
.formula { height: 55px; display: flex; align-items: center; position: relative; padding-bottom: 2px; }
.namebox { width: 168px; height: 100%; display: flex; align-items: center; justify-content: space-between; padding: 0 8px 0 20px; font-size: 24px; font-weight: 500; color: #ddd; }
.fx-btns { width: 193px; height: 100%; display: flex; align-items: center; padding-left: 32px; color: #666; }
.fx-btns svg:nth-child(2) { margin-left: 35px; }
.fx-btns em { font: italic 36px "Liberation Serif", serif; margin-left: 35px; color: #6e6e6e; }
.fx-input { width: 3029px; height: 38px; background: #383838; }
.fx-drop { margin-left: 8px; }

/* sheet */
.sheet {
  height: 1589px;
  background: #fff;
  border-top: 4px solid #e4e4e4;
  overflow: hidden;
  position: relative;
}
.sheet table { table-layout: fixed; width: 3420px; border-collapse: separate; border-spacing: 0; font-family: Lato, "Liberation Sans", sans-serif; font-size: 30px; color: #000; }
.c-h { width: 68px; } .c-a { width: 160px; } .c-b { width: 174px; } .c-n { width: 162px; } .c-g { width: 165px; }
.c-hh { width: 161px; } .c-s { width: 160px; } .c-l { width: 220px; } .c-q { width: 214px; } .c-u { width: 6px; }
.sheet thead th {
  height: 67px; padding: 0; background: #181818; color: #fff; font-weight: 400;
  border-right: 2px solid #6a6a6a; border-bottom: 3px solid #aaa;
}
.corner { background: linear-gradient(to bottom right, transparent 50%, #5a5a5a 50.5%) 10px 9px / 52px 52px no-repeat #181818 !important; border-right-color: #ccc !important; }
.sheet tbody th { height: 46px; padding: 0; background: #181818; color: #fff; font-weight: 400; border-right: 2px solid #777; border-bottom: 2px solid #888; }
.sheet td {
  height: 46px; padding: 0 6px; line-height: 44px;
  text-align: right; white-space: nowrap; overflow: hidden;
  border-right: 2px solid #d4d4d4; border-bottom: 2px solid #d4d4d4;
}
.sheet td:nth-child(2), .sheet td:nth-child(10), .sheet td:nth-child(16), .sheet td:nth-child(17), .head td { text-align: left; }
.sheet tr:not(.head) td:nth-child(16) { letter-spacing: .6px; }
.sheet td.wide { letter-spacing: 1.1px; }
.sheet td.up { background: #76fb4c; border-color: #76fb4c; box-shadow: -2px 0 0 #76fb4c; }
.sheet td.dn { background: #eb3323; border-color: #eb3323; box-shadow: -2px 0 0 #eb3323; }
.last td, .last th { border-bottom-color: #666 !important; }
.selection {
  position: absolute; right: 0; top: 1397px; width: 10px; height: 52px;
  border: 4px solid #3b7a50; border-right: 0;
}

/* sheet tabs */
.sheetbar { height: 50px; display: flex; align-items: flex-start; background: #333; border-bottom: 2px solid #000; font-size: 22px; color: #888; font-weight: 500; }
.sheet-nav { width: 121px; height: 100%; display: flex; align-items: center; justify-content: flex-start; gap: 30px; padding: 0 0 4px 30px; border-right: 2px solid #555; }
.stab { width: 159px; height: 48px; background: #202020; display: flex; align-items: center; justify-content: center; padding-bottom: 4px; border-right: 2px solid #444; }
.stab.on { height: 44px; width: 156px; margin-top: -2px; background: #fff; color: #3a7d4f; font-weight: 700; border: 0; border-radius: 0 0 4px 4px; position: relative; }
.stab-add { width: 76px; height: 44px; display: flex; align-items: center; justify-content: center; font-size: 32px; font-weight: 600; color: #aaa; border-right: 2px solid #555; }

/* status bar */
.status {
  height: 44px;
  display: flex; align-items: center;
  padding-left: 49px;
  font-size: 23.5px; font-weight: 400; color: #e6e6e6;
  background: linear-gradient(#4a4a4a, #343434);
  border-bottom: 2px solid #666;
  border-radius: 0 0 22px 22px;
}
.s-ready { width: 111px; }
.s-macro { margin-right: 32px; }
.s-acc { margin-right: 7px; }
.s-right { margin-left: auto; display: flex; align-items: center; height: 100%; padding-right: 50px; }
.view { width: 74px; height: 48px; margin-top: -4px; display: flex; align-items: center; justify-content: center; margin-right: -2px; }
.view.on { background: #555; margin-right: -1px; }
.z-minus { width: 15px; height: 5px; background: #eee; margin-left: 17px; }
.slider { width: 199px; height: 9px; margin: 0 15px; border-radius: 5px; background: #777; position: relative; }
.slider i { position: absolute; left: 98px; top: -12px; width: 33px; height: 33px; border-radius: 50%; background: #999; }
.z-plus { width: 16px; height: 16px; background: linear-gradient(#eee, #eee) center / 16px 5px no-repeat, linear-gradient(#eee, #eee) center / 5px 16px no-repeat; }
.z-val { margin-left: 35px; font-size: 23.5px; }

/* dock */
.dock {
  width: 2812px; height: 110px; margin: 4px 0 0 300px; padding: 14px 0 0 13px;
  display: flex; gap: 22px; align-items: flex-start;
  border: 2px solid #4a5078; border-top-color: #4c5180;
  border-radius: 30px;
  background: linear-gradient(90deg, #263456 0%, #2c3558 55%, #3a3561 100%);
}
.app { width: 72px; height: 72px; flex: none; position: relative; }
.app.on::after {
  content: ""; position: absolute; left: 32px; top: 85px;
  width: 7px; height: 7px; border-radius: 50%; background: #9fb0d4;
}
.app-w { margin-left: -6px; margin-right: 6px; margin-top: -7px; }
.app-x { margin-top: -10px; }
.badge {
  position: absolute; left: 48px; top: -9px; width: 33px; height: 33px; border-radius: 50%;
  background: #e04a3c; color: #fff; font-size: 20px; font-weight: 500;
  display: flex; align-items: center; justify-content: center;
}
.dock-sep { width: 1px; height: 84px; flex: none; margin: -3px 10px 0 10px; background: #777c9c; }
.dock-sep2 { margin: -3px 3px 0 9px; }
.thumb { width: 84px; height: 88px; flex: none; position: relative; margin-right: -12px; display: flex; align-items: center; }
.thumb svg { position: absolute; right: 0; bottom: -4px; }
.page { width: 84px; display: flex; flex-direction: column; gap: 5px; padding: 6px 10px; background: #171a24; }
.page i { height: 2px; background: #5a5f6b; }
.p-red { height: 50px; border-top: 6px solid #5c2a3c; }
.p-grey { height: 50px; background: #2b2b2b; border-top: 6px solid #555; }
.p-tall { height: 74px; background: #333; border-left: 14px solid #444; margin-top: -8px; }
.trash { margin: -14px 0 0 8px; flex: none; }
```
